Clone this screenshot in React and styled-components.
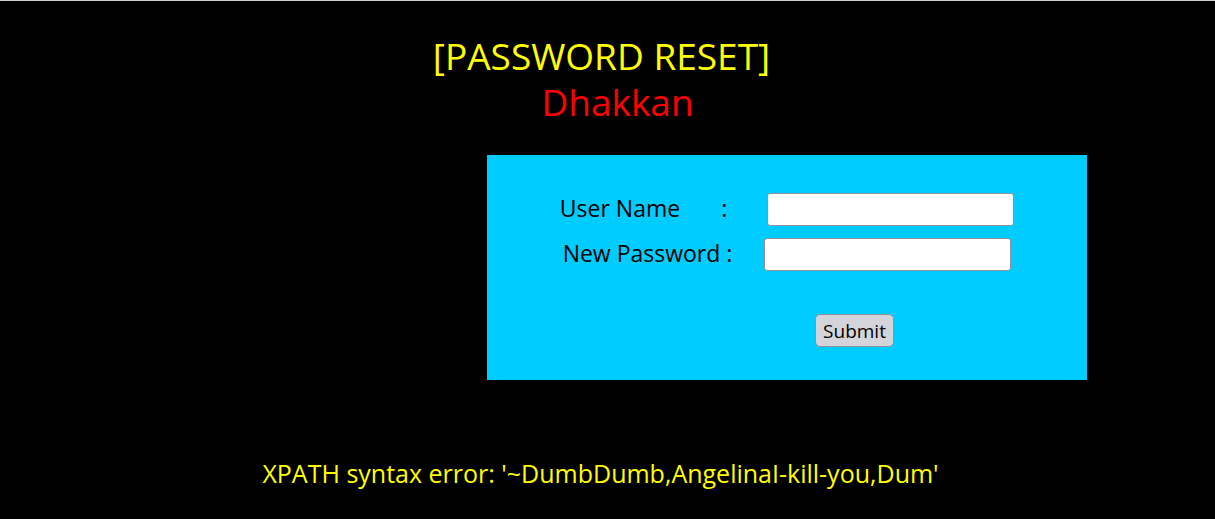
import React from 'react';
import styled, { createGlobalStyle } from 'styled-components';

const GlobalStyle = createGlobalStyle`
    html, body{
        margin:0;
        padding:0;
        background-color:#000;
    }
    body{
        font-family:"Open Sans", "Noto Sans", sans-serif;
    }
`;

const Page = styled.div`
    min-height:519px;
    box-sizing:border-box;
    border-top:1px solid #cfcfcf;
    background-color:#000;
    overflow:hidden;
`;

const Header = styled.div`
    margin-top:32px;
    text-align:center;
    font-size:37px;
    line-height:46px;
`;

const HeadLine = styled.div`
    color:${props => props.color};
    padding-left:${props => props.shift > 0 ? props.shift * 2 : 0}px;
    padding-right:${props => props.shift < 0 ? -props.shift * 2 : 0}px;
`;

const FormBox = styled.form`
    margin:30px 0 0 487px;
    width:600px;
    height:225px;
    box-sizing:border-box;
    padding-top:38px;
    background-color:#00ccff;
    display:flex;
    flex-direction:column;
    align-items:center;
    gap:12px;
`;

const Row = styled.div`
    display:flex;
    align-items:center;
    justify-content:center;
    height:33px;
    font-size:23px;
    line-height:30px;
    color:#000;
`;

const Label = styled.span`
    white-space:nowrap;
    margin-top:-3px;
`;

const Colon = styled.span`
    margin-left:${props => props.gap}px;
    margin-top:-3px;
`;

const TextInput = styled.input`
    margin-left:${props => props.gap}px;
    width:247px;
    height:33px;
    box-sizing:border-box;
    border:1.5px solid #8f8f9d;
    border-radius:3px;
    background:#fff;
    padding:0 4px;
    font-size:20px;
`;

const SubmitButton = styled.button`
    margin-top:31px;
    margin-left:135px;
    width:79px;
    height:33px;
    box-sizing:border-box;
    border:1.5px solid #8f8f9d;
    border-radius:5px;
    background-color:#d4d4db;
    color:#000;
    font-family:"Open Sans", "Noto Sans", sans-serif;
    font-size:19px;
    padding:0;
`;

const ErrorText = styled.div`
    margin-top:77px;
    padding-right:14px;
    text-align:center;
    color:#ffff00;
    font-size:25px;
    line-height:32px;
`;

export default function App(){
    return(
        <>
            <GlobalStyle />
            <Page>
                <Header>
                    <HeadLine color="#ffff00" shift={-6}>[PASSWORD RESET]</HeadLine>
                    <HeadLine color="#ff0000" shift={10}>Dhakkan</HeadLine>
                </Header>
                <FormBox onSubmit={e => e.preventDefault()}>
                    <Row>
                        <Label>User Name</Label>
                        <Colon gap={41}>:</Colon>
                        <TextInput type="text" gap={40} />
                    </Row>
                    <Row>
                        <Label>New Password :</Label>
                        <TextInput type="text" gap={32} />
                    </Row>
                    <SubmitButton type="submit">Submit</SubmitButton>
                </FormBox>
                <ErrorText>XPATH syntax error: '~DumbDumb,AngelinaI-kill-you,Dum'</ErrorText>
            </Page>
        </>
    )
}
